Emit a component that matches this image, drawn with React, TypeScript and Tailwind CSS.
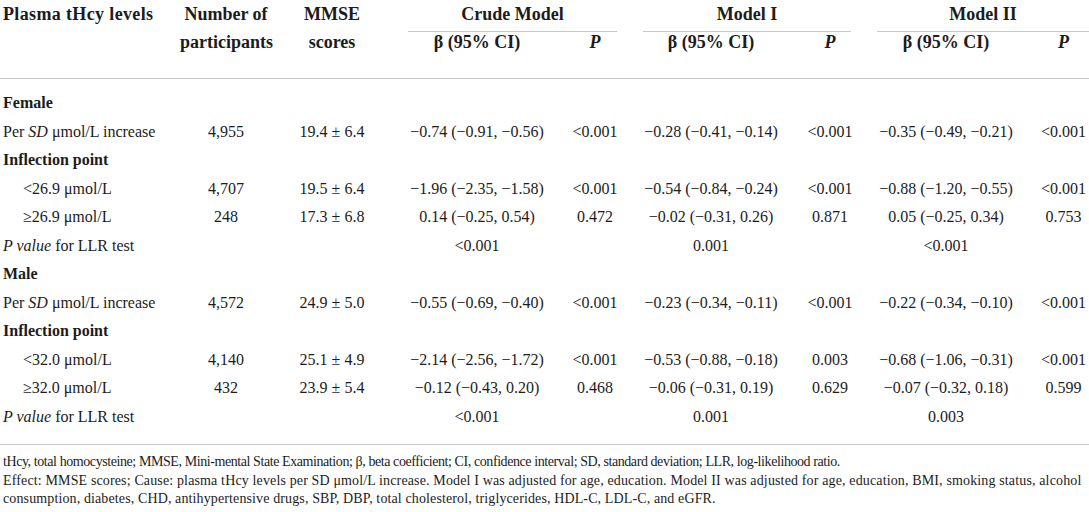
import React from "react";

const cols = "grid grid-cols-[180px_92px_120px_170px_66px_166px_72px_160px_63px]";

type Row =
  | { kind: "section"; label: string }
  | { kind: "data"; label: React.ReactNode; indent?: boolean; n: string; mmse: string; v: string[] }
  | { kind: "llr"; v: string[] };

const rows: Row[] = [
  { kind: "section", label: "Female" },
  {
    kind: "data",
    label: (
      <>
        Per <i>SD</i> μmol/L increase
      </>
    ),
    n: "4,955",
    mmse: "19.4 ± 6.4",
    v: ["−0.74 (−0.91, −0.56)", "<0.001", "−0.28 (−0.41, −0.14)", "<0.001", "−0.35 (−0.49, −0.21)", "<0.001"],
  },
  { kind: "section", label: "Inflection point" },
  {
    kind: "data",
    indent: true,
    label: "<26.9 μmol/L",
    n: "4,707",
    mmse: "19.5 ± 6.4",
    v: ["−1.96 (−2.35, −1.58)", "<0.001", "−0.54 (−0.84, −0.24)", "<0.001", "−0.88 (−1.20, −0.55)", "<0.001"],
  },
  {
    kind: "data",
    indent: true,
    label: "≥26.9 μmol/L",
    n: "248",
    mmse: "17.3 ± 6.8",
    v: ["0.14 (−0.25, 0.54)", "0.472", "−0.02 (−0.31, 0.26)", "0.871", "0.05 (−0.25, 0.34)", "0.753"],
  },
  { kind: "llr", v: ["<0.001", "0.001", "<0.001"] },
  { kind: "section", label: "Male" },
  {
    kind: "data",
    label: (
      <>
        Per <i>SD</i> μmol/L increase
      </>
    ),
    n: "4,572",
    mmse: "24.9 ± 5.0",
    v: ["−0.55 (−0.69, −0.40)", "<0.001", "−0.23 (−0.34, −0.11)", "<0.001", "−0.22 (−0.34, −0.10)", "<0.001"],
  },
  { kind: "section", label: "Inflection point" },
  {
    kind: "data",
    indent: true,
    label: "<32.0 μmol/L",
    n: "4,140",
    mmse: "25.1 ± 4.9",
    v: ["−2.14 (−2.56, −1.72)", "<0.001", "−0.53 (−0.88, −0.18)", "0.003", "−0.68 (−1.06, −0.31)", "<0.001"],
  },
  {
    kind: "data",
    indent: true,
    label: "≥32.0 μmol/L",
    n: "432",
    mmse: "23.9 ± 5.4",
    v: ["−0.12 (−0.43, 0.20)", "0.468", "−0.06 (−0.31, 0.19)", "0.629", "−0.07 (−0.32, 0.18)", "0.599"],
  },
  { kind: "llr", v: ["<0.001", "0.001", "0.003"] },
];

function DataRow({ row }: { row: Row }) {
  if (row.kind === "section") {
    return (
      <div className={`${cols} h-[28.5px] leading-[28.5px]`}>
        <div className="col-span-9 pl-[3px] font-bold text-[16px]">{row.label}</div>
      </div>
    );
  }
  if (row.kind === "llr") {
    return (
      <div className={`${cols} h-[28.5px] leading-[28.5px]`}>
        <div className="col-span-3 pl-[3px] whitespace-nowrap">
          <i>P value</i> for LLR test
        </div>
        <div className="text-center">{row.v[0]}</div>
        <div />
        <div className="text-center">{row.v[1]}</div>
        <div />
        <div className="text-center">{row.v[2]}</div>
        <div />
      </div>
    );
  }
  return (
    <div className={`${cols} h-[28.5px] leading-[28.5px]`}>
      <div className={`${row.indent ? "pl-[23px]" : "pl-[3px]"} whitespace-nowrap`}>{row.label}</div>
      <div className="text-center">{row.n}</div>
      <div className="text-center whitespace-nowrap">{row.mmse}</div>
      <div className="text-center whitespace-nowrap">{row.v[0]}</div>
      <div className="text-center">{row.v[1]}</div>
      <div className="text-center whitespace-nowrap">{row.v[2]}</div>
      <div className="text-center">{row.v[3]}</div>
      <div className="text-center whitespace-nowrap">{row.v[4]}</div>
      <div className="pl-[12px] text-center">{row.v[5]}</div>
    </div>
  );
}

export default function App() {
  return (
    <div className="w-[1089px] h-[512px] bg-white text-[#1c1c1c] font-['Liberation_Serif',serif] text-[16px] overflow-hidden">
      {/* Header */}
      <div className={`${cols} grid-rows-[32px_46px] h-[79px] border-b border-[#c8c8c8] font-bold text-[18px]`}>
        <div className="row-span-2 pl-[3px] leading-[28px] whitespace-nowrap tracking-[0.02em]">Plasma tHcy levels</div>
        <div className="row-span-2 text-center leading-[28px]">
          Number of
          <br />
          participants
        </div>
        <div className="row-span-2 text-center leading-[28px]">
          MMSE
          <br />
          scores
        </div>
        <div className="col-span-2 ml-[16px] mr-[11px] h-[32px] border-b border-[#c8c8c8] text-center leading-[28px]">
          Crude Model
        </div>
        <div className="col-span-2 ml-[15px] mr-[15px] h-[32px] border-b border-[#c8c8c8] text-center leading-[28px]">
          Model I
        </div>
        <div className="col-span-2 ml-[11px] h-[32px] border-b border-[#c8c8c8] text-center leading-[28px]">
          Model II
        </div>
        <div className="col-start-4 text-center leading-[20px]">β (95% CI)</div>
        <div className="text-center leading-[20px] italic">P</div>
        <div className="text-center leading-[20px]">β (95% CI)</div>
        <div className="text-center leading-[20px] italic">P</div>
        <div className="text-center leading-[20px]">β (95% CI)</div>
        <div className="pl-[12px] text-center leading-[20px] italic">P</div>
      </div>

      {/* Body */}
      <div className="pt-[10px] pb-[13px] border-b border-[#c8c8c8]">
        {rows.map((r, i) => (
          <DataRow key={i} row={r} />
        ))}
      </div>

      {/* Footnotes */}
      <div className="pt-[8px] pl-[3px] text-[14px] leading-[18.5px] whitespace-nowrap">
        <div className="tracking-[-0.42px]">
          tHcy, total homocysteine; MMSE, Mini-mental State Examination; β, beta coefficient; CI, confidence interval; SD,
          standard deviation; LLR, log-likelihood ratio.
        </div>
        <div className="tracking-[0.14px]">
          Effect: MMSE scores; Cause: plasma tHcy levels per SD μmol/L increase. Model I was adjusted for age, education.
          Model II was adjusted for age, education, BMI, smoking status, alcohol
        </div>
        <div className="tracking-[0.12px]">
          consumption, diabetes, CHD, antihypertensive drugs, SBP, DBP, total cholesterol, triglycerides, HDL-C, LDL-C, and
          eGFR.
        </div>
      </div>
    </div>
  );
}
